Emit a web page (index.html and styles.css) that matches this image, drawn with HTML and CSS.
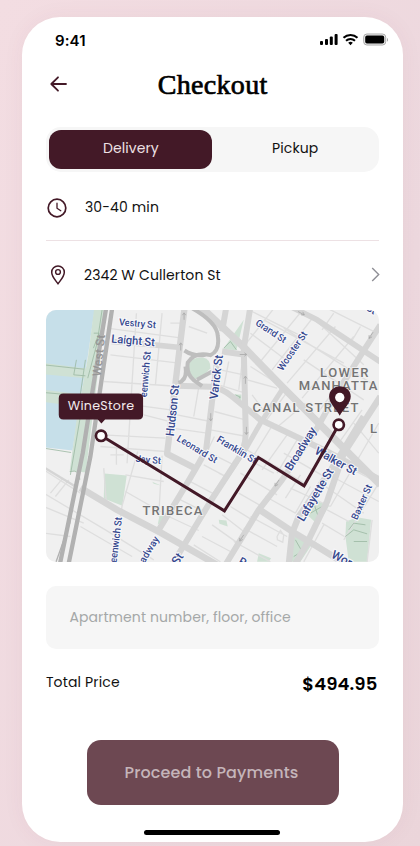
FILE: index.html
```html
<!DOCTYPE html>
<html lang="en">
<head>
<meta charset="utf-8">
<title>Checkout</title>
<link rel="stylesheet" href="styles.css">
</head>
<body>
<main class="phone">
  <div class="status">
    <span class="time">9:41</span>
    <svg class="status-icons" width="68" height="14" viewBox="0 0 68 14">
      <rect x="0" y="8" width="3" height="4" rx="1"/><rect x="5" y="6" width="3" height="6" rx="1"/><rect x="9.8" y="3.6" width="3" height="8.4" rx="1"/><rect x="14.6" y="1" width="3" height="11" rx="1"/>
      <g fill="none" stroke="#000" stroke-width="2"><path d="M23.5 4.8a10.2 10.2 0 0 1 14 0"/><path d="M26 7.8a6.6 6.6 0 0 1 9 0"/></g>
      <path d="M28.2 9.8a3.6 3.6 0 0 1 4.6 0L30.5 12.2z"/>
      <rect x="43.7" y="1" width="22" height="11" rx="3.2" fill="#eee" stroke="#aaa"/><rect x="45.2" y="2.6" width="19" height="7.9" rx="1.8"/><path d="M67 5v3.6q1.2-.6 1.2-1.8T67 5z" fill="#aaa"/>
    </svg>
  </div>
  <header class="header">
    <svg width="18" height="18" viewBox="0 0 18 18" class="line-icon"><path d="M16 9H1.5M8 2.3 1.3 9 8 15.7" stroke-width="1.8"/></svg>
    <h1>Checkout</h1>
  </header>
  <div class="tabs"><button class="tab active">Delivery</button><button class="tab">Pickup</button></div>
  <div class="row time-row">
    <svg width="20" height="20" viewBox="0 0 20 20" class="line-icon"><circle cx="10" cy="10" r="8.8" stroke-width="1.7"/><path d="M10 5.2v5l3.8 2.5" stroke-width="1.3"/></svg>
    <span class="eta">30-40 min</span>
  </div>
  <div class="row address-row">
    <svg width="20" height="22" viewBox="0 0 20 22" class="line-icon"><path d="M10 19.9C8 16.9 3.7 12.6 3.7 8.2a6.3 6.3 0 0 1 12.6 0c0 4.4-4.3 8.7-6.3 11.7z" stroke-width="1.5"/><circle cx="10" cy="8" r="2.4" stroke-width="1.4"/></svg>
    <span class="address">2342 W Cullerton St</span>
    <svg class="chevron" width="9" height="15" viewBox="0 0 9 15"><path d="M1.2 1 7.7 7.5 1.2 14"/></svg>
  </div>
  <div class="map">
    <svg width="333" height="252" viewBox="7.5 10.5 997.5 756">
      <rect x="0" y="0" width="1020" height="780" fill="#f0f0f0"/>
      <path class="water" d="M0 0H154L132 150 113 262 86 432 0 422z"/>
      <g class="park">
        <path d="M152 0H187L126 498 78 492 100 330 133 150z"/>
        <path d="M0 169 133 187 128 215 0 203zM0 250 113 264 106 300 0 286zM182 501 249 507 236 598 180 576z"/>
        <path d="M434 175Q442 151 478 153 501 158 500 185 475 216 452 218 435 206 434 175z"/>
        <path d="M600 40 578 131 538 128zM800 575 856 598 822 654 780 616zM752 690 810 705 770 766H738zM907 645 940 632 982 640 970 766H915L905 690zM525 640 548 642 552 660 527 652zM645 740 682 755 675 766H640zM570 264H593V284zM325 526 354 538 330 532z"/>
        <path d="M342 655 347 628 368 630z"/>
      </g>
      <g class="minor">
        <path d="M190 65 410 94M200 145 405 170M180 225 410 240M172 282 380 310M300 325 370 343M176 385 365 395M170 420 365 435M278 20 250 470M355 20 335 235M282 435 235 598 210 766M355 448 345 630M180 485 187 580M245 505 360 525M218 422V475M200 445H240"/>
        <path d="M465 242 450 330M400 325 500 345M384 365 490 380M530 190 600 205M525 235 605 260M512 315 605 340M500 370 610 390M512 390 495 425"/>
        <path d="M0 490 110 560M0 560 185 670 330 760M0 600 120 650M125 545 245 625M245 555 350 615M110 660 265 750M0 680 80 690M20 560 55 518M35 570 75 520"/>
        <path d="M430 520 510 562M400 575 490 620M375 630 465 672M500 440 570 475M480 475 550 512M555 425 620 455M525 500 555 515M585 560 655 600M560 600 625 640M535 625 600 675M505 655 578 707M475 690 560 735M450 715 530 766"/>
        <path d="M600 120 695 0M650 165 785 0M685 190 810 30M730 230 875 60M775 275 930 90M825 315 970 120M625 15 785 95M660 40 900 170M820 45 960 175M720 65 990 235M620 80 720 155M780 160 960 280M840 0 1000 80M870 20 835 70M950 60 920 110"/>
        <path d="M665 345 735 250M700 362 785 290M610 220 700 245M625 265 665 320M635 370 600 440M690 350 625 455M730 385 655 490M760 400 700 500M610 430 735 510M625 465 690 500M655 455 790 535M590 500 700 565M740 545 860 600M665 570 755 620M720 440 850 515M770 505 725 575M800 540 755 620"/>
        <path d="M600 665 700 720M570 705 680 766M620 630 730 690M700 690 710 672 720 686 717 707 701 700zM845 540 960 620M865 510 1005 585M890 470 1005 530M850 610 915 645M835 650 902 690M810 705 905 766M900 420 985 505M930 350 1005 440M955 310 885 410M1005 350 860 600M1005 530 900 700M985 640 970 766M840 655 780 766"/>
        <path d="M600 130 585 250M555 165 540 240M620 180 715 240M380 50H410M435 60 490 80M405 240 390 280"/>
      </g>
      <g class="greenline"><path d="M175 10 160 110 132 215M150 80H166L149 125M125 160 100 330M98 160 90 205 125 208M0 175 120 188M0 258 112 268M0 425 82 438M120 270 80 505M78 495Q110 488 108 520M540 125 560 105 578 130M575 265 590 272 578 280M915 670 930 650 965 655M905 690 930 670 970 682M930 705H970M800 620 835 600M810 590 825 635M755 700 775 735 750 750M775 735 800 710"/></g>
      <g class="road">
        <path d="M203 105 300 112 410 123" stroke-width="17"/>
        <path d="M423 0 407 130 370 442 452 484" stroke-width="19"/>
        <path d="M548 0 535 75M519 170 487 430Q465 475 345 670" stroke-width="18"/>
        <path d="M470 0 600 122 715 240 845 370 1010 535" stroke-width="22"/>
        <path d="M620 0 600 125 606 380Q605 430 578 465L500 585 385 775" stroke-width="18"/>
        <path d="M535 135 605 145M400 238 500 241Q535 245 565 270L650 340 745 385 850 435 1010 520" stroke-width="18"/>
        <path d="M740 0 820 40 1010 166" stroke-width="17"/>
        <path d="M1010 55 955 140 870 275 820 365 715 520 645 610 545 775" stroke-width="18"/>
        <path d="M718 245 650 350 610 420 495 590" stroke-width="15"/>
        <path d="M960 330 875 470 765 630 745 680 735 775M1010 270 900 440 850 585 785 720 750 780" stroke-width="19"/>
        <path d="M0 482 95 540" stroke-width="7"/>
        <path d="M110 544 220 610 350 678 520 775M645 608 750 678 820 720 910 775" stroke-width="20"/>
      </g>
      <g class="ramp"><path d="M445 5Q520 48 522 88 529 133 500 146 453 135 432 168 427 201 449 220L475 239M422 132Q450 151 485 145M404 229Q432 220 425 180M460 220 505 195"/></g>
      <g class="highway"><path d="M188 0 150 230 117 440 48 775" stroke-width="13"/><path d="M206 0 172 230 140 450 74 775" stroke-width="13"/><path d="M173 70 135 330 95 540 78 650 37 766" stroke-width="4"/></g>
      <g class="arrows"><path d="M421 40V20m-5 6 5-7 5 7M411 132v-22m-5 6 5-7 5 7M605 232v-22m-5 6 5-7 5 7M501 320v22m-5-6 5 7 5-7M608 361v22m-5-6 5 7 5-7M588 144h20m-6-5 7 5-7 5M763 15l18 10m-9 0h10l-5-9M706 520l-12 18m0-9v10l9-5M600 685l-12 18m0-9v10l9-5M988 77l-12 18m0-9v10l9-5"/></g>
      <g class="street">
        <text transform="translate(225 56) rotate(5)" textLength="111" font-size="29">Vestry St</text>
        <text transform="translate(202 108) rotate(5)" textLength="131" font-size="34.5">Laight St</text>
        <text transform="translate(309 273) rotate(-85)" textLength="138" font-size="30">eenwich St</text>
        <text transform="translate(390 390) rotate(-84)" textLength="155" font-size="35">Hudson St</text>
        <text transform="translate(521 280) rotate(-83)" textLength="134" font-size="35">Varick St</text>
        <text transform="translate(633 54) rotate(33)" textLength="104" font-size="29">Grand St</text>
        <text transform="translate(716 195) rotate(-56)" textLength="135" font-size="29">Wooster St</text>
        <text transform="translate(397 401) rotate(31)" textLength="136" font-size="29">Leonard St</text>
        <text transform="translate(517 404) rotate(31)" textLength="134" font-size="30">Franklin St</text>
        <text transform="translate(275 466) rotate(5)" textLength="76" font-size="29">Jay St</text>
        <text transform="translate(742 495) rotate(-58)" textLength="146" font-size="35">Broadway</text>
        <text transform="translate(811 440) rotate(29)" textLength="138" font-size="34.5">Walker St</text>
        <text transform="translate(779 647) rotate(-59)" textLength="178" font-size="35">Lafayette St</text>
        <text transform="translate(940 642) rotate(-66)" textLength="112" font-size="29">Baxter St</text>
        <text transform="translate(218 770) rotate(-83)" textLength="138" font-size="30">eenwich St</text>
        <text transform="translate(302 772) rotate(-59)" textLength="88" font-size="30">adway</text>
        <text transform="translate(402 778) rotate(-57)" font-size="36">St</text>
        <text transform="translate(860 752) rotate(27)" font-size="36">Wor</text>
        <text transform="translate(581 771) rotate(30)" font-size="34">Ro</text>
        <text transform="translate(965 10) rotate(30)" font-size="31">St</text>
      </g>
      <text class="west" transform="translate(171 211) rotate(-84)" textLength="126">West St</text>
      <g class="area">
        <text x="829" y="212" textLength="145">LOWER</text><text x="765" y="251" textLength="267">MANHATTAN</text><text x="626" y="315" textLength="318">CANAL STREET</text><text x="296" y="624" textLength="180">TRIBECA</text><text x="979" y="378">L</text>
      </g>
      <path class="route" d="M173 388 542 613 644 453 781 538 885 355"/>
      <circle class="stop" cx="172" cy="388" r="15.5"/><circle class="stop" cx="885" cy="355" r="15.5"/>
      <path class="pin" d="M888 328C878 308 856 290 856 270a32 30 0 0 1 65 0c0 20-23 38-33 58z"/><circle cx="888" cy="273" r="14" fill="#fff"/>
      <path class="pin" d="M59 261H284Q298 261 298 275V325Q298 339 284 339H184L173 351 162 339H59Q45 339 45 325V275Q45 261 59 261z"/>
      <text class="store" x="72" y="311" textLength="199">WineStore</text>
    </svg>
  </div>
  <div class="field"><span>Apartment number, floor, office</span></div>
  <div class="total"><span class="total-label">Total Price</span><strong>$494.95</strong></div>
  <button class="pay"><span>Proceed to Payments</span></button>
  <div class="home"></div>
</main>
</body>
</html>
```
FILE: styles.css
```css
* { box-sizing: border-box; }
body { margin: 0; height: 846px; overflow: hidden; padding: 17px 17px 0 22px; background: linear-gradient(110deg, #f3dde2, #edd8de 70%, #ebd5da); font-family: Poppins, Inter, sans-serif; color: #111; }
button { border: 0; padding: 0; font: inherit; }
svg { display: block; flex: none; }
.phone { width: 381px; height: 825px; border-radius: 38px; background: #fff; padding: 0 24px 0 24.4px; display: flex; flex-direction: column; box-shadow: 0 0 22px rgba(120, 50, 70, .05); }
.status { height: 46px; display: flex; align-items: center; justify-content: space-between; margin: 0 -9px 0 8.6px; }
.time { font: 600 15px Inter, sans-serif; letter-spacing: .1px; color: #000; }
.header { height: 42px; display: grid; grid-template-columns: 60px 1fr 60px; align-items: center; padding-left: 4px; }
.header svg { margin-top: -1px; }
h1 { margin: 2px 0 0 -4px; font: 400 28px "Liberation Serif", serif; text-align: center; color: #000; -webkit-text-stroke: .7px #000; letter-spacing: .3px; white-space: nowrap; }
.line-icon { fill: none; stroke: #431927; stroke-linecap: round; stroke-linejoin: round; }
.tabs { flex: none; height: 45px; margin-top: 21.5px; border-radius: 15px; background: #f6f6f6; padding: 3px; display: grid; grid-template-columns: 163px 1fr; width: 332.6px; }
.tab { background: none; color: #111; font-size: 14px; padding: 0 0 1px 2px; letter-spacing: .1px; }
.tab.active { background: #431927; color: #eee0e4; border-radius: 12px; padding-left: 0; }
.row { flex: none; display: flex; align-items: center; font-size: 14px; width: 332.6px; }
.time-row { height: 69.5px; padding: 4px 0 0 1.1px; border-bottom: 1px solid #ede1e4; gap: 17.5px; }
.address-row { height: 68px; padding-left: 1.6px; gap: 16px; }
.eta { letter-spacing: .12px; }
.address { letter-spacing: .1px; }
.chevron { margin: -1px -1px 0 auto; fill: none; stroke: #8f8f96; stroke-width: 1.4; }
.map { margin-top: .6px; width: 332.6px; height: 252px; border-radius: 10px; overflow: hidden; flex: none; font-family: Roboto, sans-serif; }
.water { fill: #c6dfe9; }
.park { fill: #cfe1d4; }
.minor { fill: none; stroke: #dedede; stroke-width: 4; }
.greenline { fill: none; stroke: #9cb9a4; stroke-width: 2.5; }
.road { fill: none; stroke: #d5d5d5; stroke-linejoin: round; }
.ramp { fill: none; stroke: #bebebe; stroke-width: 12; stroke-linejoin: round; }
.highway { fill: none; stroke: #b1b1b1; }
.arrows { fill: none; stroke: #aaa; stroke-width: 2.5; }
.street { fill: #35478d; font-weight: 500; stroke: #f8f8fb; stroke-width: 6px; paint-order: stroke; }
.west { fill: #969696; font-size: 36px; font-weight: 500; }
.area { fill: #747474; font-size: 39px; font-weight: 500; stroke: #f2f2f2; stroke-width: 5px; paint-order: stroke; }
.route { fill: none; stroke: #431927; stroke-width: 9; }
.stop { fill: #fff; stroke: #431927; stroke-width: 8; }
.pin { fill: #431927; }
.store { fill: #f3eaed; font-family: Poppins, Inter, sans-serif; font-size: 38px; }
.field { flex: none; width: 332.6px; height: 63px; margin-top: 24px; border-radius: 10px; background: #f6f6f6; padding-left: 23px; display: flex; align-items: center; color: #a5a8a8; font-size: 14px; letter-spacing: .1px; }
.total { flex: none; height: 34px; margin-top: 18px; width: 331px; display: flex; align-items: center; justify-content: space-between; font-size: 14px; letter-spacing: .15px; }
.total-label { margin: -3px 0 0 -.5px; }
.total strong { font-size: 18px; font-weight: 600; letter-spacing: .1px; color: #000; }
.pay { flex: none; width: 252px; height: 65px; margin: 39.4px 0 0 40.6px; padding-right: 3px; border-radius: 14px; background: #6d4852; color: #c5b5ba; font-size: 16px; font-weight: 500; letter-spacing: .12px; }
.home { flex: none; width: 136px; height: 5px; margin: 25px 0 0 98px; border-radius: 3px; background: #000; }
```
